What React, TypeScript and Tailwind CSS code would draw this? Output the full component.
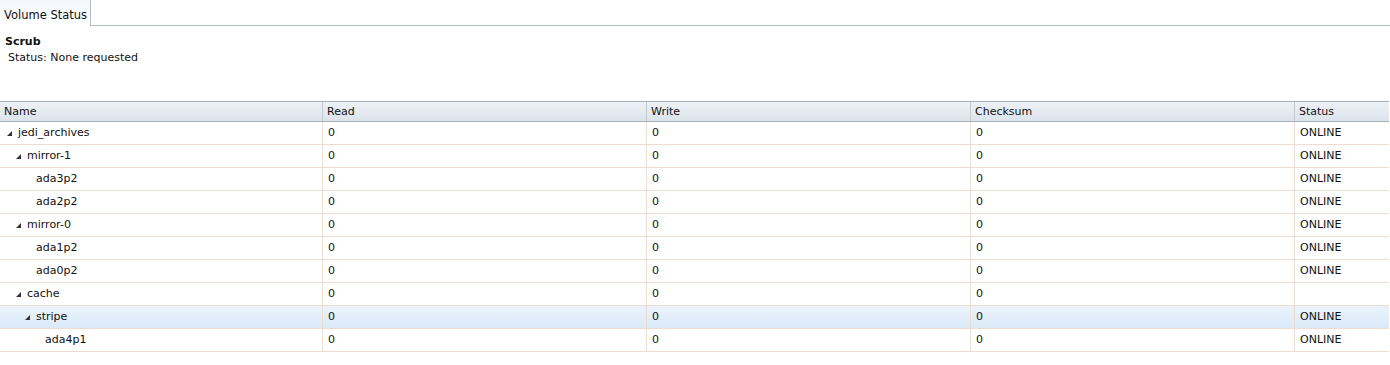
import { ReactNode } from 'react';

type Row = { name: string; level: number; expandable: boolean; status: string; selected?: boolean };

const rows: Row[] = [
  { name: 'jedi_archives', level: 0, expandable: true, status: 'ONLINE' },
  { name: 'mirror-1', level: 1, expandable: true, status: 'ONLINE' },
  { name: 'ada3p2', level: 2, expandable: false, status: 'ONLINE' },
  { name: 'ada2p2', level: 2, expandable: false, status: 'ONLINE' },
  { name: 'mirror-0', level: 1, expandable: true, status: 'ONLINE' },
  { name: 'ada1p2', level: 2, expandable: false, status: 'ONLINE' },
  { name: 'ada0p2', level: 2, expandable: false, status: 'ONLINE' },
  { name: 'cache', level: 1, expandable: true, status: '' },
  { name: 'stripe', level: 2, expandable: true, status: 'ONLINE', selected: true },
  { name: 'ada4p1', level: 3, expandable: false, status: 'ONLINE' },
];

const font = { fontFamily: 'Tahoma, "DejaVu Sans", Verdana, sans-serif' };

function Caret() {
  return (
    <svg width="5" height="5" viewBox="0 0 5 5" className="mr-[6px] shrink-0">
      <polygon points="5,0 5,5 0,5" fill="#333" />
    </svg>
  );
}

function Cell({ children, last }: { children?: ReactNode; last?: boolean }) {
  return (
    <div className={`flex items-center pl-[5px] ${last ? '' : 'border-r border-[#ecddd0]'}`}>
      {children}
    </div>
  );
}

export default function App() {
  return (
    <div className="w-[1390px] h-[365px] bg-white text-[11px] text-[#111]" style={font}>
      <div className="flex h-[26px]">
        <div className="w-[91px] whitespace-nowrap border-r border-[#b4bccb] bg-gradient-to-b from-[#f3f7fc] to-white pl-[4px] pt-[8px] text-[11.5px] leading-[14px]">
          Volume Status
        </div>
        <div className="flex-1 border-b border-[#b4bccb]" />
      </div>
      <div className="pl-[5px] pt-[9px]">
        <div className="text-[11px] font-bold leading-[14px]">Scrub</div>
        <div className="pl-[3px] pt-[2px] leading-[14px] text-[11px]">Status: None requested</div>
      </div>
      <div className="mt-[36px] w-[1389px]">
        <div className="grid grid-cols-[323px_324px_324px_324px_1fr] h-[21px] border-t border-b border-[#a9b0ba] bg-gradient-to-b from-[#eef2f7] to-[#dce3eb]">
          {['Name', 'Read', 'Write', 'Checksum', 'Status'].map((h, i) => (
            <div key={h} className={`flex items-center pl-[4px] pt-[1px] ${i < 4 ? 'border-r border-[#c3c8cf]' : ''}`}>
              {h}
            </div>
          ))}
        </div>
        {rows.map((r) => (
          <div
            key={r.name}
            className={`grid grid-cols-[323px_324px_324px_324px_1fr] h-[23px] border-b border-[#ecddd0] ${
              r.selected ? 'bg-gradient-to-b from-[#eaf3fc] to-[#dbeaf8]' : ''
            }`}
          >
            <div className="flex items-center border-r border-[#ecddd0]" style={{ paddingLeft: 7 + r.level * 9 }}>
              {r.expandable ? <Caret /> : <span className="w-[11px]" />}
              {r.name}
            </div>
            <Cell>0</Cell>
            <Cell>0</Cell>
            <Cell>0</Cell>
            <Cell last>{r.status}</Cell>
          </div>
        ))}
      </div>
    </div>
  );
}
